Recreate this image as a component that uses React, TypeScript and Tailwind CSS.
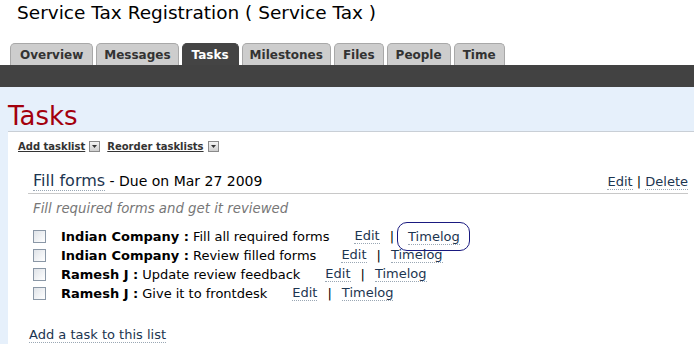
import { ReactNode } from "react";

type Task = { who: string; what: string };

const tasks: Task[] = [
  { who: "Indian Company", what: "Fill all required forms" },
  { who: "Indian Company", what: "Review filled forms" },
  { who: "Ramesh J", what: "Update review feedback" },
  { who: "Ramesh J", what: "Give it to frontdesk" },
];

// padding per tab, tuned to the screenshot
const tabs = [
  { label: "Overview", pad: "px-[9px]" },
  { label: "Messages", pad: "px-[7px]" },
  { label: "Tasks", pad: "px-[9px]" },
  { label: "Milestones", pad: "px-[7px]" },
  { label: "Files", pad: "px-[8px]" },
  { label: "People", pad: "px-[8px]" },
  { label: "Time", pad: "px-[8px]" },
];

function DotLink({ children, className = "" }: { children: ReactNode; className?: string }) {
  return (
    <a className={`cursor-pointer border-b border-dotted border-[#9aa7b4] leading-[1.1] text-[#1c3550] ${className}`}>
      {children}
    </a>
  );
}

function DropBox() {
  return (
    <span className="mx-[4px] inline-flex h-[11px] w-[11px] items-center justify-center border border-[#8a8a8a] bg-gradient-to-b from-[#f4f4f4] to-[#cfcfcf]">
      <svg width="5" height="3" viewBox="0 0 5 3">
        <path d="M0 0h5L2.5 3z" fill="#333" />
      </svg>
    </span>
  );
}

export default function App() {
  return (
    <div className="h-[351px] w-[694px] overflow-hidden bg-white font-['DejaVu_Sans',Verdana,sans-serif] text-black">
      <h1 className="pl-[17px] pt-[1px] text-[18.5px] leading-[24px]">Service Tax Registration ( Service Tax )</h1>

      <nav className="mt-[18px] flex gap-[3px] pl-[10px]">
        {tabs.map((t) => (
          <div
            key={t.label}
            className={`h-[22px] rounded-t-[5px] border border-b-0 pt-[3px] text-[12px] font-bold leading-[16px] ${t.pad} ${
              t.label === "Tasks"
                ? "border-[#444] bg-[#444] text-white"
                : "border-[#a8a8a8] bg-[#cdcdcd] text-[#333]"
            }`}
          >
            {t.label}
          </div>
        ))}
      </nav>
      <div className="h-[22px] bg-[#424242]" />

      <div className="bg-[#e6f0fb] pl-[8px]">
        <h2 className="pt-[15px] text-[26px] leading-[29px] text-[#a3000d]">Tasks</h2>
        <div className="h-[213px] border-t border-[#c9cfd6] bg-white pl-[10px] pt-[7px]">
          <div className="flex h-[14px] items-center text-[10px] font-bold text-[#333]">
            <a className="underline">Add tasklist</a>
            <DropBox />
            <a className="ml-[3px] underline">Reorder tasklists</a>
            <DropBox />
          </div>

          <div className="ml-[10px] mr-[6px] mt-[19px]">
            <div className="flex h-[22px] items-center justify-between border-b border-[#c8c8c8] pb-[2px] pl-[5px]">
              <div className="text-[14px]">
                <DotLink className="text-[16px] text-[#0f2d4c]">Fill forms</DotLink> - Due on Mar 27 2009
              </div>
              <div className="text-[13px]">
                <DotLink>Edit</DotLink> | <DotLink>Delete</DotLink>
              </div>
            </div>
            <p className="pl-[5px] pt-[7px] text-[13.3px] leading-[16px] italic text-[#777]">
              Fill required forms and get it reviewed
            </p>

            <ul className="mt-[10px] pl-[5px] text-[13px]">
              {tasks.map((t, i) => (
                <li key={i} className="flex h-[19px] items-center">
                  <span className="mr-[15px] h-[13px] w-[13px] border border-[#8a97a6] bg-gradient-to-br from-[#dfe3e8] to-white" />
                  <b>{t.who} :</b>
                  <span className="ml-[4px]">{t.what}</span>
                  <DotLink className="ml-[25px]">Edit</DotLink>
                  <span className="mx-[10px]">|</span>
                  {i === 0 ? (
                    <span className="-ml-[7px] rounded-[10px] border border-[#1a1a80] py-[4px] pl-[10px] pr-[9px]">
                      <DotLink>Timelog</DotLink>
                    </span>
                  ) : (
                    <DotLink>Timelog</DotLink>
                  )}
                </li>
              ))}
            </ul>

            <div className="ml-[1px] mt-[24px] text-[13px] leading-[16px]">
              <DotLink>Add a task to this list</DotLink>
            </div>
          </div>
        </div>
      </div>
    </div>
  );
}
